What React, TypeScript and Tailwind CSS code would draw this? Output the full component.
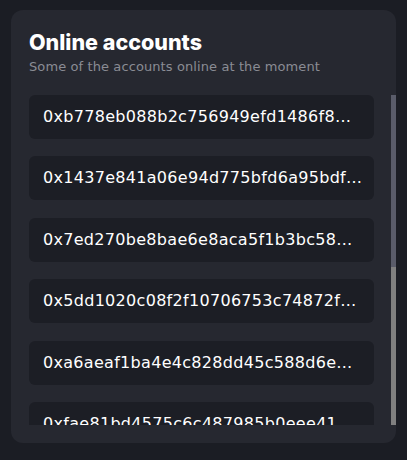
import React from "react";

const accounts = [
  "0xb778eb088b2c756949efd1486f8…",
  "0x1437e841a06e94d775bfd6a95bdf…",
  "0x7ed270be8bae6e8aca5f1b3bc58…",
  "0x5dd1020c08f2f10706753c74872f…",
  "0xa6aeaf1ba4e4c828dd45c588d6e…",
  "0xfae81bd4575c6c487985b0eee41…",
  "0x3c91d0a7be25f86e4c1d09b2a7f…",
];

export default function App() {
  return (
    <div
      className="w-[407px] h-[460px] bg-[#1b1d24] pt-[10px] pl-[11px]"
      style={{ fontFamily: '"DejaVu Sans", sans-serif' }}
    >
      <div className="w-[385px] h-[433px] bg-[#262830] rounded-[12px] pl-[18px] pt-[18px] pb-[18px] flex flex-col">
        <h1
          className="text-[21.5px] leading-[28px] font-extrabold text-white"
          style={{ fontFamily: "Inter, sans-serif" }}
        >
          Online accounts
        </h1>
        <p className="mt-[2px] text-[13px] leading-[18px] text-[#8a8c94] tracking-[0.1px]">
          Some of the accounts online at the moment
        </p>

        <div className="mt-[19px] flex-1 min-h-0 flex gap-[17px]">
          {/* List */}
          <div className="w-[345px] overflow-hidden flex flex-col gap-[17.4px]">
            {accounts.map((a) => (
              <div
                key={a}
                className="shrink-0 h-[44px] bg-[#1c1e25] rounded-[6px] pl-[14px] pr-[8px] flex items-center"
              >
                <span className="text-[16px] tracking-[0.3px] text-white whitespace-nowrap">
                  {a}
                </span>
              </div>
            ))}
          </div>

          {/* Scrollbar */}
          <div className="w-[5px] bg-[#808080] flex flex-col">
            <div className="h-[172px] bg-[#5a5c6a]" />
          </div>
        </div>
      </div>
    </div>
  );
}
